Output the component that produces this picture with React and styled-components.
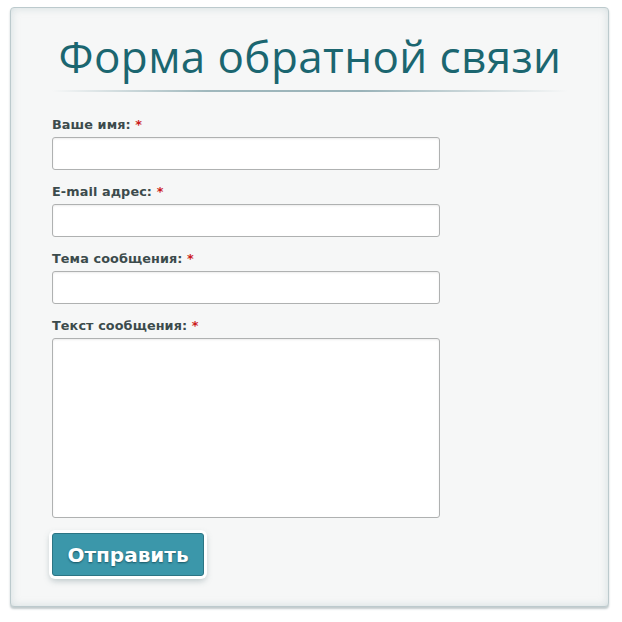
import React from "react";
import styled, { createGlobalStyle } from "styled-components";

const Global = createGlobalStyle`
  html, body {
    margin: 0;
    padding: 0;
    background: #ffffff;
  }
  body {
    font-family: "DejaVu Sans", "Noto Sans", sans-serif;
  }
`;

const Page = styled.div`
  padding: 7px 12px 14px 10px;
`;

const Panel = styled.form`
  width: 599px;
  height: 600px;
  box-sizing: border-box;
  background: #f6f7f7;
  border: 1px solid #bccacd;
  border-radius: 4px;
  box-shadow: inset 0 0 8px rgba(150, 175, 180, 0.35), 0 2px 2px rgba(120, 140, 145, 0.45);
  padding: 19px 40px 0 41px;
  display: flex;
  flex-direction: column;
`;

const Title = styled.h1`
  margin: 0;
  text-align: center;
  font-family: "Open Sans", "Noto Sans", sans-serif;
  font-weight: 400;
  font-size: 44px;
  line-height: 58px;
  letter-spacing: 0.4px;
  color: #1b6670;
`;

const Divider = styled.div`
  height: 2px;
  margin: 5px 0 0;
  background: linear-gradient(
    to right,
    rgba(155, 181, 187, 0) 0%,
    #a0b8bd 30%,
    #9ab3b9 60%,
    rgba(155, 181, 187, 0) 100%
  );
`;

const Fields = styled.div`
  display: flex;
  flex-direction: column;
  gap: 13px;
  margin-top: 24px;
`;

const Field = styled.label`
  display: flex;
  flex-direction: column;
  gap: 4px;
`;

const LabelText = styled.span`
  font-family: "DejaVu Sans", sans-serif;
  font-weight: bold;
  font-size: 12.8px;
  line-height: 17px;
  color: #3c4b4c;
  letter-spacing: 0.1px;
`;

const Req = styled.span`
  color: #cc1b1b;
`;

const Input = styled.input`
  width: 388px;
  height: 33px;
  box-sizing: border-box;
  border: 1px solid #afb1b1;
  border-radius: 3px;
  background: #ffffff;
  box-shadow: inset 0 1px 2px rgba(0, 0, 0, 0.08);
  outline: none;
`;

const TextArea = styled.textarea`
  width: 388px;
  height: 180px;
  box-sizing: border-box;
  border: 1px solid #afb1b1;
  border-radius: 3px;
  background: #ffffff;
  box-shadow: inset 0 1px 2px rgba(0, 0, 0, 0.08);
  resize: none;
  outline: none;
`;

const Submit = styled.button`
  align-self: flex-start;
  margin-top: 15px;
  width: 152px;
  height: 43px;
  box-sizing: border-box;
  background: #3b97aa;
  border: 1px solid #2c7584;
  border-radius: 3px;
  box-shadow: 0 0 0 3px #ffffff, 0 3px 6px 2px rgba(80, 110, 115, 0.35);
  color: #ffffff;
  font-family: "DejaVu Sans", sans-serif;
  font-weight: bold;
  font-size: 20px;
  text-shadow: 0 1px 2px rgba(0, 40, 50, 0.6);
  cursor: pointer;
`;

const fields = [
  { label: "Ваше имя:", type: "text" },
  { label: "E-mail адрес:", type: "email" },
  { label: "Тема сообщения:", type: "text" },
];

export default function App() {
  return (
    <>
      <Global />
      <Page>
        <Panel onSubmit={(e) => e.preventDefault()}>
          <Title>Форма обратной связи</Title>
          <Divider />
          <Fields>
            {fields.map((f) => (
              <Field key={f.label}>
                <LabelText>
                  {f.label} <Req>*</Req>
                </LabelText>
                <Input type={f.type} />
              </Field>
            ))}
            <Field>
              <LabelText>
                Текст сообщения: <Req>*</Req>
              </LabelText>
              <TextArea />
            </Field>
          </Fields>
          <Submit type="submit">Отправить</Submit>
        </Panel>
      </Page>
    </>
  );
}
